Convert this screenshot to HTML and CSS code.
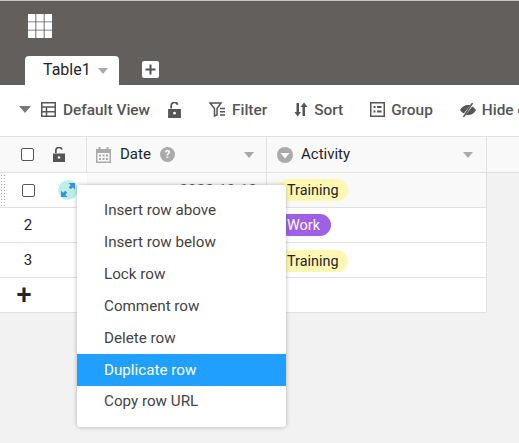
FILE: index.html
```html
<!DOCTYPE html>
<html lang="en">
<head>
    <meta charset="UTF-8">
    <title>Table1</title>
    <link rel="stylesheet" href="styles.css">
</head>
<body>
    <header class="top-bar">
        <svg class="app-logo" width="24" height="24" viewBox="0 0 24 24">
            <path fill="#fff" d="M0 0h7.400v7.400H0zM8.300 0h7.400v7.400H8.300zM16.600 0H24v7.400h-7.400zM0 8.300h7.400v7.400H0zM8.300 8.300h7.400v7.400H8.300zM16.600 8.300H24v7.400h-7.400zM0 16.600h7.400V24H0zM8.300 16.600h7.400V24H8.300zM16.600 16.600H24V24h-7.400z"/>
        </svg>
        <div class="tabs">
            <div class="tab">Table1 <span class="caret tab-caret"></span></div>
            <svg class="add-tab" width="17" height="17" viewBox="0 0 17 17">
                <rect width="17" height="17" rx="2" fill="#fff"/>
                <path fill="#555" d="M7.500 3.500h2v4h4v2h-4v4h-2v-4h-4v-2h4z"/>
            </svg>
        </div>
    </header>

    <div class="toolbar">
        <span class="caret view-caret"></span>
        <div class="tool default-view">
            <svg width="15" height="15" viewBox="0 0 15 15"><path fill="none" stroke="#555" stroke-width="1.500" d="M.750.750h13.500v13.500H.750zM.750 5h13.500M.750 9.700h13.500M5.500 5v9.200"/></svg>
            Default View
        </div>
        <svg class="tool-lock" width="13" height="16" viewBox="0 0 12 15"><path fill="#555" d="M0 6.500h12V15H0zM2 6V3.500a4 4 0 0 1 7.800-1.200l-1.600.5A2.300 2.300 0 0 0 3.700 3.500V6z"/><circle cx="6" cy="10.500" r="1.300" fill="#fff"/></svg>
        <div class="tool filter-tool">
            <svg width="17" height="15" viewBox="0 0 17 15"><path fill="none" stroke="#555" stroke-width="1.500" d="M1 1h11L8 6.500V13L5.500 14V6.500z"/><path stroke="#555" stroke-width="1.500" d="M11 6.500h5M11 9.800h5M11 13h5"/></svg>
            Filter
        </div>
        <div class="tool sort-tool">
            <svg width="14" height="15" viewBox="0 0 14 15"><path fill="#555" d="M2.500 1h2.500v9h2L3.700 14.500.4 10h2.100zM8.500 14H11V5h2.500L10 .5 6.500 5h2z"/></svg>
            Sort
        </div>
        <div class="tool group-tool">
            <svg width="15" height="15" viewBox="0 0 15 15"><path fill="none" stroke="#555" stroke-width="1.500" d="M.750.750h13.500v13.500H.750z"/><path fill="#555" d="M3.500 4h2v2h-2zM7 4h4.500v2H7zM3.500 8.500h2v2h-2zM7 8.500h4.500v2H7z"/></svg>
            Group
        </div>
        <div class="tool hide-tool">
            <svg width="16" height="14" viewBox="0 0 16 14"><path fill="#555" d="M0 7c1.500-3 4.500-5 8-5 .8 0 1.600.1 2.300.3L3.800 10.500C2.200 9.700 1 8.500 0 7zM16 7c-1.500 3-4.500 5-8 5-.8 0-1.500-.1-2.200-.3l6.400-8.200C13.800 4.300 15 5.500 16 7z"/><path stroke="#555" stroke-width="1.500" d="M12.500 0 3.500 14"/></svg>
            Hide columns
        </div>
    </div>

    <div class="grid">
        <div class="row head-row">
            <div class="index-cell">
                <span class="checkbox"></span>
                <svg class="head-lock" width="12" height="15" viewBox="0 0 12 15"><path fill="#555" d="M0 6.500h12V15H0zM2 6V3.500a4 4 0 0 1 7.800-1.200l-1.600.5A2.300 2.300 0 0 0 3.700 3.500V6z"/><circle cx="6" cy="10.500" r="1.300" fill="#fff"/></svg>
            </div>
            <div class="cell date-cell">
                <svg width="15" height="16" viewBox="0 0 15 16"><path fill="#aaa" d="M0 2h2.500V0h2v2h6V0h2v2H15v14H0zM1.500 6v8.500h12V6z"/><path fill="#aaa" d="M3 7.500h2v2H3zM6.500 7.500h2v2h-2zM10 7.500h2v2h-2zM3 11h2v2H3zM6.500 11h2v2h-2zM10 11h2v2h-2z"/></svg>
                <span class="col-title">Date</span>
                <span class="help">?</span>
                <span class="caret col-caret"></span>
            </div>
            <div class="cell activity-cell">
                <svg width="16" height="16" viewBox="0 0 16 16"><circle cx="8" cy="8" r="8" fill="#aaa"/><path fill="#fff" d="M3.500 6h9L8 11.500z"/></svg>
                <span class="col-title">Activity</span>
                <span class="caret col-caret"></span>
            </div>
        </div>

        <div class="row hover-row">
            <div class="index-cell">
                <span class="drag-handle"></span>
                <span class="checkbox row-check"></span>
                <span class="expand">
                    <svg width="14" height="14" viewBox="0 0 14 14"><path fill="#3f8ee6" d="M7.500 0H14v6.500l-2.200-2.200-2 2-2.100-2.100 2-2zM6.500 14H0V7.500l2.200 2.200 2-2 2.100 2.100-2 2z"/></svg>
                </span>
            </div>
            <div class="cell date-cell"><span class="date-value">2022-10-18</span></div>
            <div class="cell activity-cell"><span class="pill pill-training">Training</span></div>
        </div>
        <div class="row">
            <div class="index-cell"><span class="row-num">2</span></div>
            <div class="cell date-cell"></div>
            <div class="cell activity-cell"><span class="pill pill-work">Work</span></div>
        </div>
        <div class="row">
            <div class="index-cell"><span class="row-num">3</span></div>
            <div class="cell date-cell"></div>
            <div class="cell activity-cell"><span class="pill pill-training pill-low">Training</span></div>
        </div>
        <div class="row add-row">
            <div class="index-cell"><span class="add-sign">+</span></div>
            <div class="cell date-cell"></div>
            <div class="cell activity-cell"></div>
        </div>
    </div>

    <ul class="context-menu">
        <li>Insert row above</li>
        <li>Insert row below</li>
        <li>Lock row</li>
        <li>Comment row</li>
        <li>Delete row</li>
        <li class="active">Duplicate row</li>
        <li class="last">Copy row URL</li>
    </ul>
</body>
</html>
```

FILE: styles.css
```css
html, body {
    height: 100%;
}

body {
    margin: 0;
    overflow: hidden;
    background-color: #f2f2f2;
    font-family: Roboto, sans-serif;
    font-size: 14px;
    color: #212529;
    position: relative;
}

/* Top Bar */
.top-bar {
    height: 84px;
    background-color: #625f5c;
    border-top: 1px solid #c4c4c4;
    display: flex;
    flex-direction: column;
}

.app-logo {
    display: block;
    margin: 13px 0 0 28px;
}

.tabs {
    margin: 18px 0 0 25px;
    display: flex;
    align-items: flex-start;
}

.tab {
    width: 94px;
    height: 29px;
    box-sizing: border-box;
    padding: 5px 0 0 18px;
    background-color: #fff;
    border-radius: 4px 4px 0 0;
    font-size: 16px;
    line-height: 18px;
}

.add-tab {
    margin: 5px 0 0 23px;
}

.caret {
    display: inline-block;
    width: 0;
    height: 0;
    border-style: solid;
    border-color: #aaa transparent transparent;
}

.tab-caret {
    border-width: 6px 5px 0;
    margin-left: 3px;
    vertical-align: 1px;
}

/* Toolbar */
.toolbar {
    height: 52px;
    box-sizing: border-box;
    background-color: #fff;
    border-bottom: 1px solid #e0e0e0;
    padding: 0 0 2px 19px;
    display: flex;
    align-items: center;
    white-space: nowrap;
    overflow: hidden;
    font-size: 15.4px;
    font-weight: 500;
    color: #555;
}

.toolbar > * {
    flex-shrink: 0;
}

.tool {
    display: flex;
    align-items: center;
    gap: 6px;
}

.default-view {
    gap: 7px;
}

.view-caret {
    border-width: 7px 6px 0;
    border-top-color: #777;
    margin-right: 10px;
}

.tool-lock {
    margin-left: 18px;
}

.filter-tool {
    margin-left: 28px;
}

.sort-tool,
.group-tool,
.hide-tool {
    margin-left: 27px;
}

/* Grid */
.row {
    display: flex;
    height: 35px;
    box-sizing: border-box;
    border-bottom: 1px solid #e0e0e0;
    width: 487px;
    background-color: #fff;
}

.head-row {
    height: 36px;
    background-color: #f9f9f9;
    width: 100%;
}

.hover-row {
    background-color: #f9f9f9;
}

.index-cell {
    width: 87px;
    flex-shrink: 0;
    box-sizing: border-box;
    border-right: 1px solid #e0e0e0;
    display: flex;
    align-items: center;
    position: relative;
}

.row:not(.head-row) .index-cell {
    border-right: none;
    background-color: #fff;
}

.cell {
    box-sizing: border-box;
    border-right: 1px solid #e0e0e0;
    display: flex;
    align-items: center;
    height: 100%;
}

.date-cell {
    width: 180px;
    padding: 0 9px;
}

.activity-cell {
    width: 220px;
    padding: 0 10px;
}

.col-title {
    font-size: 15px;
    margin-left: 9px;
    padding-bottom: 2px;
}

.activity-cell .col-title {
    margin-left: 8px;
}

.help {
    width: 15px;
    height: 15px;
    margin-left: 9px;
    border-radius: 50%;
    background-color: #aaa;
    color: #fff;
    font-size: 11px;
    font-weight: 700;
    line-height: 15px;
    text-align: center;
}

.col-caret {
    border-width: 6px 5px 0;
    margin-left: auto;
    margin-right: 3px;
}

.checkbox {
    width: 11px;
    height: 11px;
    margin-left: 21px;
    border: 1px solid #555;
    border-radius: 2px;
    background-color: #fff;
}

.row-check {
    margin-left: 22px;
}

.head-lock {
    margin-left: 19px;
}

.drag-handle {
    position: absolute;
    left: 0;
    top: 1px;
    width: 5px;
    height: 33px;
    background-image: radial-gradient(#aaa 1px, transparent 1px);
    background-size: 3px 3px;
}

.expand {
    width: 20px;
    height: 20px;
    margin-left: 23px;
    border-radius: 50%;
    background-color: #bdf0e4;
    display: flex;
    align-items: center;
    justify-content: center;
}

.row-num {
    width: 56px;
    text-align: center;
    font-size: 15px;
}

.add-sign {
    width: 48px;
    text-align: center;
    font-size: 27px;
    font-weight: 500;
    line-height: 30px;
}

.date-value {
    margin-left: auto;
    color: #555;
    font-size: 15.4px;
}

.pill {
    height: 22px;
    line-height: 24px;
    padding: 0 10px;
    border-radius: 11px;
    font-size: 14.4px;
}

.pill-low {
    margin-top: 2px;
}

.pill-training {
    background-color: #fff8b3;
}

.pill-work {
    background-color: #9f5fe6;
    color: #fff;
    padding-right: 11px;
}

/* Context Menu */
.context-menu {
    position: absolute;
    left: 77px;
    top: 185px;
    width: 209px;
    box-sizing: border-box;
    margin: 0;
    padding: 9px 0;
    list-style: none;
    background-color: #fff;
    border-radius: 3px;
    box-shadow: 0 0 4px rgba(60, 75, 90, 0.4);
    font-size: 15.2px;
    color: #444;
}

.context-menu li {
    height: 32px;
    line-height: 32px;
    padding-left: 27px;
}

.context-menu li.active {
    background-color: #209fff;
    color: #fff;
}

.context-menu li.last {
    line-height: 30px;
}
```
